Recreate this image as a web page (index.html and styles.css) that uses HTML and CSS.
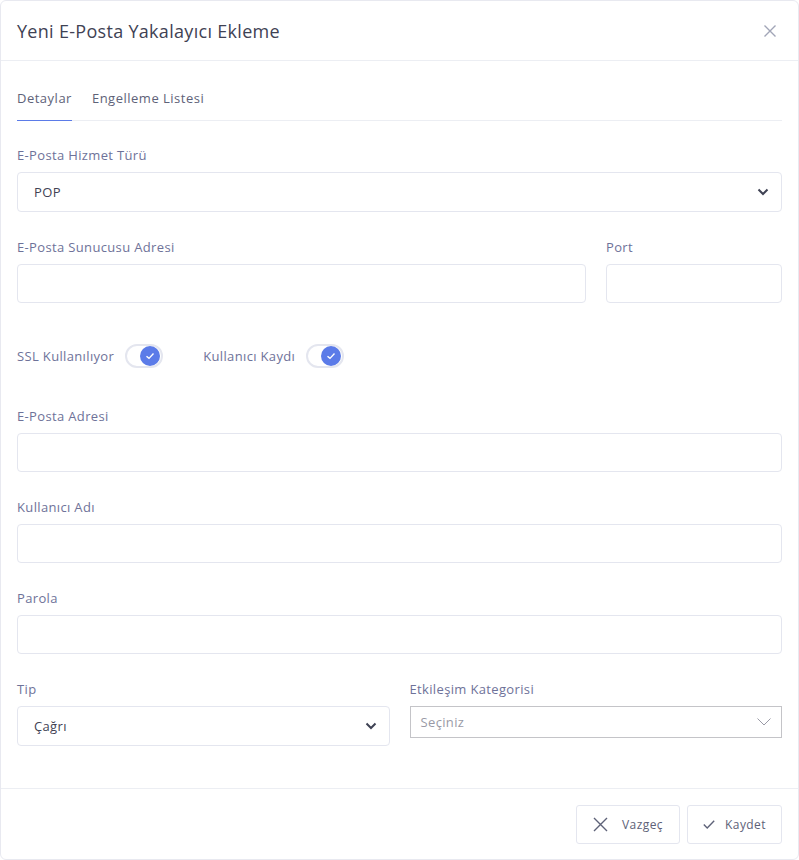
FILE: index.html
```html
<!DOCTYPE html>
<html lang="tr">
<head>
    <meta charset="UTF-8">
    <meta name="viewport" content="width=device-width, initial-scale=1.0">
    <title>Yeni E-Posta Yakalayıcı Ekleme</title>
    <link rel="stylesheet" href="styles.css">
</head>
<body>
<div class="modal">
    <!-- Header -->
    <div class="modal-header">
        <h3 class="modal-title">Yeni E-Posta Yakalayıcı Ekleme</h3>
        <button class="close-btn" type="button" aria-label="Kapat">
            <svg width="14" height="14" viewBox="0 0 14 14">
                <path d="M1.5 1.5 L12.5 12.5 M12.5 1.5 L1.5 12.5" stroke="#a1a5b7" stroke-width="1.4" fill="none"/>
            </svg>
        </button>
    </div>

    <div class="modal-body">
        <!-- Tabs -->
        <ul class="tabs">
            <li class="tab active">Detaylar</li>
            <li class="tab">Engelleme Listesi</li>
        </ul>

        <div class="form-group">
            <label class="form-label">E-Posta Hizmet Türü</label>
            <div class="select">
                <span>POP</span>
                <svg class="chevron" width="12" height="8" viewBox="0 0 12 8">
                    <path d="M1.5 1.5 L6 6 L10.5 1.5" stroke="#3f4254" stroke-width="2" fill="none"/>
                </svg>
            </div>
        </div>

        <div class="form-row server-row">
            <div class="form-group">
                <label class="form-label">E-Posta Sunucusu Adresi</label>
                <input class="input" type="text">
            </div>
            <div class="form-group">
                <label class="form-label">Port</label>
                <input class="input" type="text">
            </div>
        </div>

        <div class="switch-row">
            <label class="switch-item">
                <span>SSL Kullanılıyor</span>
                <span class="switch on"><span class="knob">
                    <svg width="10" height="8" viewBox="0 0 10 8"><path d="M1.5 4.2 L4 6.4 L8.5 1.6" stroke="#fff" stroke-width="1.4" fill="none"/></svg>
                </span></span>
            </label>
            <label class="switch-item">
                <span>Kullanıcı Kaydı</span>
                <span class="switch on"><span class="knob">
                    <svg width="10" height="8" viewBox="0 0 10 8"><path d="M1.5 4.2 L4 6.4 L8.5 1.6" stroke="#fff" stroke-width="1.4" fill="none"/></svg>
                </span></span>
            </label>
        </div>

        <div class="form-group">
            <label class="form-label">E-Posta Adresi</label>
            <input class="input" type="text">
        </div>

        <div class="form-group">
            <label class="form-label">Kullanıcı Adı</label>
            <input class="input" type="text">
        </div>

        <div class="form-group">
            <label class="form-label">Parola</label>
            <input class="input" type="password">
        </div>

        <div class="form-row half-row">
            <div class="form-group">
                <label class="form-label">Tip</label>
                <div class="select">
                    <span>Çağrı</span>
                    <svg class="chevron" width="12" height="8" viewBox="0 0 12 8">
                        <path d="M1.5 1.5 L6 6 L10.5 1.5" stroke="#3f4254" stroke-width="2" fill="none"/>
                    </svg>
                </div>
            </div>
            <div class="form-group">
                <label class="form-label">Etkileşim Kategorisi</label>
                <div class="select select-plain">
                    <span>Seçiniz</span>
                    <svg width="14" height="8" viewBox="0 0 14 8">
                        <path d="M0.5 0.5 L7 7 L13.5 0.5" stroke="#9a9aa6" stroke-width="1" fill="none"/>
                    </svg>
                </div>
            </div>
        </div>
    </div>

    <!-- Footer -->
    <div class="modal-footer">
        <button class="btn" type="button">
            <svg width="15" height="15" viewBox="0 0 15 15">
                <path d="M1 1 L14 14 M14 1 L1 14" stroke="#5e6278" stroke-width="1.4" fill="none"/>
            </svg>
            Vazgeç
        </button>
        <button class="btn btn-save" type="button">
            <svg width="12" height="9" viewBox="0 0 12 9">
                <path d="M0.8 4.6 L4.2 8 L11.2 0.8" stroke="#5e6278" stroke-width="1.4" fill="none"/>
            </svg>
            Kaydet
        </button>
    </div>
</div>
</body>
</html>
```

FILE: styles.css
```css
* {
    box-sizing: border-box;
}

body {
    margin: 0;
    font-family: "Open Sans", "Noto Sans", sans-serif;
    letter-spacing: 0.35px;
    background: #fff;
    color: #3f4254;
}

.modal {
    width: 799px;
    height: 860px;
    border: 1px solid #e8e9f0;
    border-radius: 6px;
    background: #fff;
    display: flex;
    flex-direction: column;
}

.modal-header {
    height: 60px;
    display: flex;
    align-items: center;
    justify-content: space-between;
    padding: 0 16px;
    border-bottom: 1px solid #eceef3;
}

.modal-title {
    margin: 0;
    font-size: 18px;
    font-weight: 500;
    letter-spacing: 0.3px;
    color: #3f4254;
}

.close-btn {
    border: 0;
    background: none;
    padding: 0;
    margin-right: 5px;
    display: flex;
}

.modal-body {
    flex: 1;
    padding: 23px 16px 0;
}

.tabs {
    list-style: none;
    margin: 0 0 26px;
    padding: 0;
    display: flex;
    gap: 20px;
    border-bottom: 1px solid #eceef3;
}

.tab {
    font-size: 13px;
    font-weight: 500;
    letter-spacing: 0.5px;
    color: #5e6278;
    padding: 5px 0 13px;
    margin-bottom: -1px;
    border-bottom: 1px solid transparent;
}

.tab.active {
    border-bottom-color: #5b7be8;
}

.form-group {
    margin-bottom: 27px;
}

.form-label {
    display: block;
    font-size: 13px;
    color: #6e7299;
    margin-bottom: 8px;
    line-height: 17px;
}

.input,
.select {
    display: flex;
    align-items: center;
    width: 100%;
    height: 39px;
    border: 1px solid #e4e6ef;
    border-radius: 4px;
    background: #fff;
    font-family: inherit;
    font-size: 13px;
    color: #3f4254;
    padding: 0 16px;
    outline: none;
}

.select {
    height: 40px;
    justify-content: space-between;
    padding-right: 12px;
}

.select-plain {
    height: 32px;
    border: 1px solid #c4c4c8;
    border-radius: 0;
    color: #9a9aa6;
    padding: 0 10px;
}

.form-row {
    display: grid;
    gap: 20px;
}

.server-row {
    grid-template-columns: 1fr 176px;
}

.half-row {
    grid-template-columns: 1fr 1fr;
}

.switch-row {
    display: flex;
    gap: 40px;
    margin: 14px 0 40px;
}

.switch-item {
    display: flex;
    align-items: center;
    gap: 11px;
    font-size: 13px;
    color: #6e7299;
}

.switch {
    width: 38px;
    height: 24px;
    border: 2px solid #e4e6ef;
    border-radius: 12px;
    background: #fff;
    display: flex;
    align-items: center;
    justify-content: flex-end;
    padding: 0 1px;
}

.knob {
    width: 20px;
    height: 20px;
    border-radius: 50%;
    background: #5b7be8;
    display: flex;
    align-items: center;
    justify-content: center;
}

.modal-footer {
    height: 71px;
    border-top: 1px solid #eceef3;
    display: flex;
    justify-content: flex-end;
    align-items: center;
    gap: 7px;
    padding: 1px 16px 0 0;
}

.btn {
    height: 39px;
    display: flex;
    align-items: center;
    justify-content: center;
    gap: 14px;
    border: 1px solid #e4e6ef;
    border-radius: 3px;
    background: #fff;
    font-family: inherit;
    font-size: 12px;
    letter-spacing: 0.4px;
    color: #5e6278;
    padding: 0;
    width: 104px;
}

.btn svg {
    flex-shrink: 0;
}

.btn-save {
    width: 95px;
    gap: 10px;
}
```
